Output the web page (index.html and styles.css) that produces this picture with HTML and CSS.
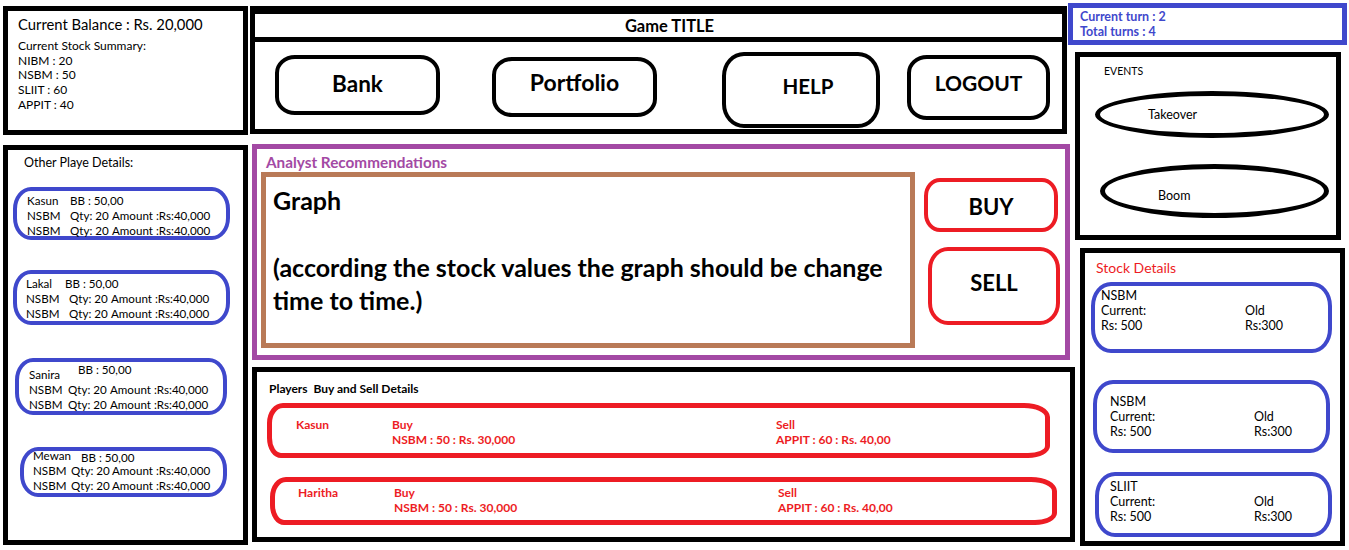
FILE: index.html
```html
<!DOCTYPE html>
<html>
<head>
<meta charset="utf-8">
<title>Stock Game Wireframe</title>
<link rel="stylesheet" href="styles.css">
</head>
<body>
<div class="page">
  <div class="col col-left">
    <section class="box balance">
      <div class="balance-title">Current Balance : Rs. 20,000</div>
      <div class="summary">
        <div>Current Stock Summary:</div>
        <div>NIBM : 20</div>
        <div>NSBM : 50</div>
        <div>SLIIT : 60</div>
        <div>APPIT : 40</div>
      </div>
    </section>
    <section class="box players">
      <div class="players-title">Other Playe Details:</div>
      <div class="pcard pc1">
        <div><span class="pname">Kasun</span>BB : 50,00</div>
        <div><span class="c1">NSBM</span><span class="c2">Qty: 20</span>Amount :Rs:40,000</div>
        <div><span class="c1">NSBM</span><span class="c2">Qty: 20</span>Amount :Rs:40,000</div>
      </div>
      <div class="pcard pc2">
        <div><span class="pname">Lakal</span>BB : 50,00</div>
        <div><span class="c1">NSBM</span><span class="c2">Qty: 20</span>Amount :Rs:40,000</div>
        <div><span class="c1">NSBM</span><span class="c2">Qty: 20</span>Amount :Rs:40,000</div>
      </div>
      <div class="pcard pc3">
        <div><span class="pname">Sanira</span><span class="raised">BB : 50,00</span></div>
        <div><span class="c1">NSBM</span><span class="c2">Qty: 20</span>Amount :Rs:40,000</div>
        <div><span class="c1">NSBM</span><span class="c2">Qty: 20</span>Amount :Rs:40,000</div>
      </div>
      <div class="pcard pc4">
        <div class="first"><span class="pname">Mewan</span><span class="lowered">BB : 50,00</span></div>
        <div><span class="c1">NSBM</span><span class="c2">Qty: 20</span>Amount :Rs:40,000</div>
        <div><span class="c1">NSBM</span><span class="c2">Qty: 20</span>Amount :Rs:40,000</div>
      </div>
    </section>
  </div>

  <div class="col col-mid">
    <header class="nav">
      <div class="nav-title">Game TITLE</div>
      <div class="nav-buttons">
        <div class="nbtn nb-bank">Bank</div>
        <div class="nbtn nb-portfolio">Portfolio</div>
        <div class="nbtn nb-help">HELP</div>
        <div class="nbtn nb-logout">LOGOUT</div>
      </div>
    </header>
    <section class="analyst">
      <div class="analyst-title">Analyst Recommendations</div>
      <div class="analyst-row">
        <div class="graph">
          <div>Graph</div>
          <div>&nbsp;</div>
          <div>(according the stock values the graph should be change</div>
          <div>time to time.)</div>
        </div>
        <div class="trade-btns">
          <div class="tbtn buy">BUY</div>
          <div class="tbtn sell">SELL</div>
        </div>
      </div>
    </section>
    <section class="trades">
      <div class="trades-title">Players&nbsp; Buy and Sell Details</div>
      <div class="oval ov1">
        <div>Kasun</div>
        <div>Buy<br>NSBM : 50 : Rs. 30,000</div>
        <div>Sell<br>APPIT : 60 : Rs. 40,00</div>
      </div>
      <div class="oval ov2">
        <div>Haritha</div>
        <div>Buy<br>NSBM : 50 : Rs. 30,000</div>
        <div>Sell<br>APPIT : 60 : Rs. 40,00</div>
      </div>
    </section>
  </div>

  <div class="col col-right">
    <section class="turns">
      <div>Current turn : 2</div>
      <div>Total turns : 4</div>
    </section>
    <section class="events">
      <div class="events-title">EVENTS</div>
      <div class="ellipse el1">Takeover</div>
      <div class="ellipse el2">Boom</div>
    </section>
    <section class="stock">
      <div class="stock-title">Stock Details</div>
      <div class="scard sc1">
        <div class="full">NSBM</div>
        <div>Current:</div><div>Old</div>
        <div>Rs: 500</div><div>Rs:300</div>
      </div>
      <div class="scard sc2">
        <div class="full">NSBM</div>
        <div>Current:</div><div>Old</div>
        <div>Rs: 500</div><div>Rs:300</div>
      </div>
      <div class="scard sc3">
        <div class="full">SLIIT</div>
        <div>Current:</div><div>Old</div>
        <div>Rs: 500</div><div>Rs:300</div>
      </div>
    </section>
  </div>
</div>
</body>
</html>
```

FILE: styles.css
```css
* { box-sizing: border-box; margin: 0; padding: 0; }

body {
  margin: 0;
  width: 1349px;
  height: 550px;
  overflow: hidden;
  background: #fff;
  color: #000;
  font-family: Lato, "Liberation Sans", sans-serif;
}

.page { display: flex; align-items: flex-start; }
.col { display: flex; flex-direction: column; align-items: flex-start; }
.col-left { width: 248px; }
.col-mid { width: 828px; }
.col-right { width: 273px; }

/* ---------- left column ---------- */
.balance {
  margin: 6px 0 0 3px;
  width: 245px;
  height: 129px;
  border: 5px solid #000;
  padding: 3.5px 0 0 10px;
}
.balance-title { font-size: 14.8px; line-height: 18px; }
.summary { margin-top: 6.5px; font-size: 12px; line-height: 14.7px; }

.players {
  margin: 10px 0 0 3px;
  width: 245px;
  height: 400px;
  border: 5px solid #000;
  padding-top: 5px;
  display: flex;
  flex-direction: column;
  align-items: flex-start;
}
.players-title { font-size: 12.5px; line-height: 15px; padding-left: 16px; }

.pcard {
  border: 4px solid #3f48cc;
  border-radius: 18px / 22px;
  font-size: 11.6px;
  line-height: 15px;
  white-space: nowrap;
  --c1: 43px;
  --c2: 42px;
  --nm: 43px;
}
.pcard .c1 { display: inline-block; width: var(--c1); }
.pcard .c2 { display: inline-block; width: var(--c2); }
.pcard .pname { display: inline-block; width: var(--nm); }
.pc1 { margin: 17px 0 0 5px; width: 217px; height: 53px; padding: 1.5px 0 0 10px; }
.pc2 { margin: 30px 0 0 5px; width: 217px; height: 55px; padding: 1.5px 0 0 9px; --nm: 39px; }
.pc3 { margin: 33px 0 0 7px; width: 212px; height: 57px; padding: 4.5px 0 0 10px; --nm: 49px; --c1: 39px; --c2: 42px; }
.pc4 { margin: 32px 0 0 12px; width: 207px; height: 50px; padding: 0 0 0 9px; --nm: 48px; --c1: 38px; --c2: 41px; }
.pc4 .first { margin-top: -3px; }
.raised { vertical-align: 5px; line-height: 0; }
.lowered { vertical-align: -2px; line-height: 0; }

/* ---------- middle column ---------- */
.nav {
  margin: 6px 0 0 2px;
  width: 817px;
  height: 128px;
  border: 5px solid #000;
  border-top-width: 8px;
  display: flex;
  flex-direction: column;
}
.nav-title {
  height: 28px;
  border-bottom: 5px solid #000;
  text-align: center;
  font-weight: 700;
  font-size: 16.5px;
  line-height: 21px;
  padding: 2px 0 0 22px;
}
.nav-buttons { display: flex; align-items: flex-start; flex: 1; }
.nbtn {
  border: 4px solid #000;
  border-radius: 20px / 18px;
  display: flex;
  align-items: center;
  justify-content: center;
  font-weight: 700;
  font-size: 20.5px;
}
.nb-bank { margin: 13px 0 0 20px; width: 165px; height: 60px; padding-bottom: 4px; font-size: 22.5px; }
.nb-portfolio { margin: 15px 0 0 52px; width: 165px; height: 60px; padding-bottom: 10px; font-size: 23px; }
.nb-help { margin: 10px 0 0 65px; width: 158px; height: 76px; padding: 0 0 8px 14px; border-radius: 22px / 24px; }
.nb-logout { margin: 13px 0 0 27px; width: 143px; height: 65px; padding-bottom: 11px; font-size: 21px; }

.analyst {
  margin: 10px 0 0 4px;
  width: 818px;
  height: 216px;
  border: 5px solid #a349a4;
  padding: 4.5px 0 0 4px;
}
.analyst-title {
  color: #a349a4;
  font-weight: 700;
  font-size: 15.3px;
  line-height: 17px;
  padding-left: 5px;
}
.analyst-row { display: flex; align-items: flex-start; margin-top: 1.5px; }
.graph {
  width: 654px;
  height: 176px;
  border: 5px solid #b97a57;
  padding: 6.5px 0 0 7px;
  font-weight: 700;
  font-size: 25px;
  line-height: 33.5px;
  white-space: nowrap;
}
.trade-btns { display: flex; flex-direction: column; align-items: flex-start; margin: 6px 0 0 9px; }
.tbtn {
  border: 4px solid #ed1c24;
  display: flex;
  align-items: center;
  justify-content: center;
  font-weight: 700;
  font-size: 22px;
}
.buy { width: 134px; height: 54px; border-radius: 16px / 18px; padding-top: 2px; }
.sell { width: 132px; height: 78px; margin: 15px 0 0 4px; border-radius: 20px / 22px; padding-bottom: 8px; }

.trades {
  margin: 7px 0 0 4px;
  width: 823px;
  height: 175px;
  border: 5px solid #000;
  padding-top: 8.5px;
}
.trades-title { font-weight: 700; font-size: 12px; line-height: 15px; padding-left: 12px; }
.oval {
  border: 5px solid #ed1c24;
  border-radius: 16px 26px 22px 14px / 20px 14px 12px 20px;
  color: #ed1c24;
  font-weight: 700;
  font-size: 12px;
  line-height: 15px;
  display: grid;
  grid-template-columns: 96px 384px auto;
  white-space: nowrap;
}
.ov1 { margin: 7.5px 0 0 10px; width: 783px; height: 55px; padding: 8.5px 0 0 24px; }
.ov2 { margin: 19px 0 0 13px; width: 787px; height: 48px; padding: 2.5px 0 0 23px; }

/* ---------- right column ---------- */
.turns {
  margin: 3px 0 0 -8px;
  width: 279px;
  height: 42px;
  border: 5px solid #3f48cc;
  padding: 0.5px 0 0 7px;
  color: #3f48cc;
  font-weight: 700;
  font-size: 12.5px;
  line-height: 15px;
}
.events {
  margin: 7px 0 0 -1px;
  width: 266px;
  height: 188px;
  border: 5px solid #000;
  padding-top: 7px;
  display: flex;
  flex-direction: column;
  align-items: flex-start;
}
.events-title { padding-left: 24px; font-size: 10.5px; line-height: 14px; }
.ellipse {
  border: 5px solid #000;
  border-radius: 50%;
  font-size: 12.5px;
  line-height: 14px;
  display: flex;
  align-items: center;
}
.el1 { margin: 13px 0 0 15px; width: 234px; height: 47px; padding-left: 48px; }
.el2 { margin: 26px 0 0 20px; width: 229px; height: 54px; padding: 10px 0 0 53px; }

.stock {
  margin: 8px 0 0 4px;
  width: 265px;
  height: 298px;
  border: 5px solid #000;
  padding-top: 5.5px;
  display: flex;
  flex-direction: column;
  align-items: flex-start;
}
.stock-title { color: #ed1c24; font-size: 14px; line-height: 17px; padding-left: 11px; }
.scard {
  border: 4px solid #3f48cc;
  border-radius: 20px / 24px;
  font-size: 12.5px;
  line-height: 15px;
  display: grid;
  grid-template-columns: 144px auto;
  align-content: start;
}
.scard .full { grid-column: 1 / -1; }
.sc1 { margin: 6.5px 0 0 6px; width: 241px; height: 71px; padding: 1.5px 0 0 6px; }
.sc2 { margin: 27px 0 0 8px; width: 237px; height: 73px; padding: 9.5px 0 0 13px; }
.sc3 { margin: 19px 0 0 10px; width: 237px; height: 65px; padding: 2.5px 0 0 11px; }
```
